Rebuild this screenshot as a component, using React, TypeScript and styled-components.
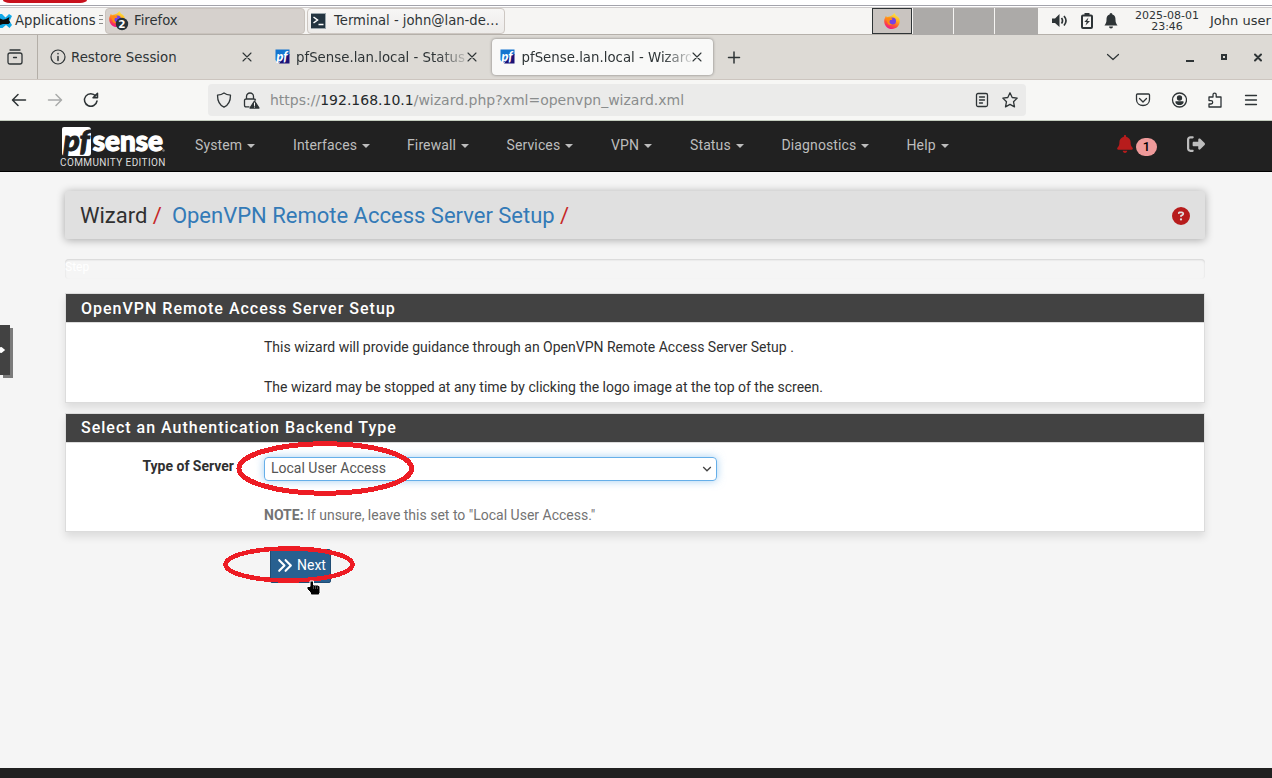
import React from 'react';
import styled, { createGlobalStyle } from 'styled-components';
import { FaBell, FaRightFromBracket, FaCircleQuestion, FaAnglesRight } from 'react-icons/fa6';

const Global = createGlobalStyle`
  * { box-sizing: border-box; }
  html, body { margin: 0; padding: 0; overflow: hidden; }
  body { background: #f5f5f5; font-family: Roboto, sans-serif; font-size: 14px; color: #303030; }
`;

const ui = `'DejaVu Sans', sans-serif`;

const Screen = styled.div`
  width: 1272px; height: 778px; display: flex; flex-direction: column; position: relative; overflow: hidden;
  background: #f5f5f5;
`;
const TopStrip = styled.div`
  height: 8px; flex: none; background: #fff; border-bottom: 1px solid #cfcccc; padding-left: 3px;
  background-image: linear-gradient(#a3a3ab, #a3a3ab); background-size: 100% 1px; background-position: 0 5px; background-repeat: no-repeat;
`;
const RedTab = styled.div`
  width: 84px; height: 3px; background: #c8101c; border-radius: 0 0 7px 7px / 0 0 3px 3px;
`;

const TaskBar = styled.div`
  height: 27px; flex: none; display: flex; background: #f6f5f3; border-bottom: 1px solid #b5b0aa;
  font: 13.2px ${ui}; color: #2e3436; white-space: nowrap;
`;
const AppsMenu = styled.div`
  width: 105px; display: flex; align-items: center; flex: none; padding-bottom: 2px;
  svg { flex: none; margin-top: 2px; }
  span { margin-left: 3px; width: 81px; }
`;
const Handle = styled.i`
  margin-left: 3px; width: 4px; height: 10px;
  background: repeating-linear-gradient(#8b8b89 0 1px, transparent 1px 4px);
`;
const TaskButton = styled.div<{ $active?: boolean; $w: number }>`
  width: ${p => p.$w}px; height: 26px; margin-right: 2px; flex: none; display: flex; align-items: center; padding: 0 0 1px 3px; gap: 5px;
  border: 1px solid ${p => (p.$active ? '#c9c3bd' : '#cdc7c2')}; border-radius: 4px;
  background: ${p => (p.$active ? '#d6d1cd' : 'linear-gradient(#f7f6f5, #edebe9)')};
  svg { flex: none; }
`;
const Spacer = styled.div`flex: 1;`;
const Pager = styled.div`
  display: flex; width: 166px; gap: 1px; background: #f6f5f3;
`;
const Desk = styled.div<{ $active?: boolean; $w: number }>`
  width: ${p => p.$w}px; height: ${p => (p.$active ? 26 : 27)}px; background: ${p => (p.$active ? '#c9c4c0' : '#acaaa8')};
  ${p => p.$active && 'border: 1px solid #2e3436;'}
  display: flex; align-items: center; justify-content: center;
`;
const Tray = styled.div`
  width: 94px; display: flex; align-items: center; padding-left: 14px; gap: 10.5px; svg { flex: none; }
`;
const Clock = styled.div`
  width: 70px; text-align: center; font-size: 11px; line-height: 11px; padding-top: 2px;
`;
const User = styled.div`
  width: 70px; padding: 4px 0 0 8px; line-height: 17px; font-size: 13px;
`;

const TabBar = styled.div`
  height: 45px; flex: none; display: flex; background: #dddad5; border-bottom: 1px solid #ccc5bf;
  font: 13.33px ${ui}; color: #2e3436; padding-right: 7px;
`;
const RecentBox = styled.div`
  width: 38px; border-right: 1px solid #b3aea7; display: flex; align-items: center; padding-left: 7px; flex: none;
`;
const Tab = styled.div<{ $active?: boolean; $w: number }>`
  width: ${p => p.$w}px; height: 36px; margin-top: 4px; display: flex; align-items: center; gap: 5.5px; flex: none;
  padding: 0 ${p => (p.$active ? 11 : 13)}px 0 ${p => (p.$active ? 8 : 10)}px;
  border-radius: 4px; white-space: nowrap;
  ${p => p.$active && 'background: #f9f9f8; box-shadow: 0 0 3px rgba(0,0,0,.45);'}
  svg { flex: none; }
`;
const TabTitle = styled.span<{ $fade?: boolean }>`
  flex: 1; min-width: 0; overflow: hidden; line-height: 20px; padding-top: 1px;
  ${p => p.$fade && 'mask-image: linear-gradient(to right, #000 calc(100% - 28px), rgba(0,0,0,.15) 100%); margin-right: -4.5px;'}
`;
const WinControls = styled.div`
  display: flex; align-items: center; width: 160px; svg { flex: none; }
`;

const ToolBar = styled.div`
  height: 41px; flex: none; display: flex; align-items: center; background: #f7f7f5; border-bottom: 1px solid #c3ccbe;
  padding: 0 13px 0 11px;
`;
const ToolButtons = styled.div<{ $gap: number }>`
  display: flex; gap: ${p => p.$gap}px; align-items: center; svg { display: block; }
`;
const UrlBar = styled.div`
  width: 818px; flex: none; height: 32px; margin: 0 109px 0 109px; border-radius: 4px; background: #ebebea;
  display: flex; align-items: center; padding: 0 8px; font: 14px ${ui}; color: #8a8d8d;
`;
const Url = styled.div`
  margin-left: 10px; flex: 1; white-space: nowrap; b { font-weight: 400; color: #24292b; }
`;

const Nav = styled.nav`
  height: 51px; flex: none; background: #212121; border-bottom: 1px solid #000; display: flex; padding-left: 56px;
`;
const Logo = styled.svg`display: block; flex: none; width: 120px; height: 50px;`;
const Menu = styled.div`
  display: flex; padding: 0 0 0 19px; height: 48px; align-items: center; flex: 1;
`;
const MenuItem = styled.div<{ $w: number }>`
  width: ${p => p.$w}px; color: #bdbdbd; display: flex; align-items: center; gap: 5px; font-size: 14px; letter-spacing: .12px;
  &::after { content: ''; margin-top: 2px; border: 4px solid transparent; border-top-color: #bdbdbd; border-bottom: 0; }
`;
const Alerts = styled.div`
  width: 156px; display: flex; height: 48px; align-items: center; color: #b71c1c; svg { display: block; margin-bottom: 2px; }
`;
const Badge = styled.span`
  width: 21px; height: 18px; border-radius: 9px; background: #ef9a9a; color: #000; font-size: 13px; font-weight: 500;
  display: flex; align-items: center; justify-content: center; margin: 3px 30px 0 2px;
`;

const Page = styled.main`
  flex: 1; padding: 19px 67px 0 65px; display: flex; flex-direction: column;
`;
const Header = styled.header`
  height: 48px; flex: none; background: #e0e0e0; border-radius: 2px; box-shadow: 0 1px 9px rgba(0,0,0,.32);
  display: flex; align-items: center; padding: 0 15px; font-size: 22px; white-space: pre;
  em { font-style: normal; color: #c62828; letter-spacing: -.25px; }
  a { color: #337ab7; }
  svg { margin: 2px 0 0 auto; }
`;
const Progress = styled.div`
  height: 20px; flex: none; margin: 20px 0 14px; border-radius: 4px; box-shadow: inset 0 1px 2px rgba(0,0,0,.14);
  color: #fff; font-size: 12px; line-height: 16px;
`;
const Panel = styled.section<{ $h: number }>`
  height: ${p => p.$h}px; flex: none; margin-bottom: 10px; border: 1px solid #dcdcdc; background: #fff;
  box-shadow: 0 5px 8px rgba(0,0,0,.10);
`;
const PanelTitle = styled.h2<{ $line: number }>`
  margin: 0; height: 29px; background: #424242; color: #fff; font-size: 16px; font-weight: 500; letter-spacing: 1px;
  line-height: ${p => p.$line}px; padding-left: 15px; border-bottom: 1px solid #dcdcdc;
`;
const Copy = styled.p<{ $top: number }>`
  margin: ${p => p.$top}px 0 0 198px; line-height: 20px; font-size: 14px;
`;
const FieldRow = styled.div`
  display: flex; padding-top: 14px;
`;
const Label = styled.label`
  width: 168px; margin-right: 30px; text-align: right; font-weight: 700; line-height: 18px;
`;
const Select = styled.div`
  width: 453px; height: 24px; border: 1px solid #66afe9; border-radius: 4px; box-shadow: 0 0 8px rgba(102,175,233,.6);
  display: flex; align-items: center; justify-content: space-between; padding: 0 4px 2px 6px; color: #555;
  svg { margin-top: 2px; }
`;
const Note = styled.p`
  margin: 24px 0 0 198px; color: #737373; line-height: 20px;
`;
const Next = styled.button`
  width: 61px; height: 34px; margin: 7px 0 0 205px; border: 1px solid #204d74; border-radius: 2px; background: #286090;
  color: #fff; font: 14px Roboto, sans-serif; display: flex; align-items: center; gap: 4px; padding: 0 5px 2px; white-space: nowrap;
  svg { flex: none; }
`;
const Footer = styled.footer`height: 10px; flex: none; background: #212121;`;
const SideHandle = styled.div`
  position: absolute; left: 0; top: 325px; width: 10px; height: 50px; background: #424242; box-shadow: 3px 3px 0 #7b7b7b;
  display: flex; align-items: center;
`;
const Marks = styled.svg`position: absolute; left: 0; top: 0; pointer-events: none;`;

const Flame = ({ size }: { size: number }) => (
  <svg width={size} height={size} viewBox="0 0 16 16">
    <defs>
      <linearGradient id="ff" x1=".8" y1="0" x2=".35" y2="1">
        <stop offset="0" stopColor="#fff14a" /><stop offset=".4" stopColor="#ffb01f" /><stop offset=".7" stopColor="#ff5a30" /><stop offset="1" stopColor="#f0148a" />
      </linearGradient>
    </defs>
    <path d="M1.800 3 3 4l2.500-.5L8 2.500 10.500 0l1.300 2.500L14 4l1.300 1.500C17 11 13.500 16 8 16S-.8 11 .5 6z" fill="url(#ff)" />
    <circle cx="8.500" cy="8" r="3.500" fill="#7542e5" />
    <path d="M2 5.500 5 4.300 8.500 5.600 7.800 7H6L5.400 9C5.600 10.600 7 11.300 8.500 11.300 6 12.800 3.500 11.500 3.300 9z" fill="#ff8a16" />
  </svg>
);

const PfIcon = () => (
  <svg width="16" height="16" viewBox="0 0 16 16">
    <path d="M.5.500h14V6L9 10 3 14l-2.500-3z" fill="#1475cf" /><path d="M14.500 5v9.500H4L9 8z" fill="#1b1277" />
    <text x="1.500" y="11.500" fontFamily="Lato, sans-serif" fontWeight="900" fontStyle="italic" fontSize="12.500" fill="#fff" textLength="11" lengthAdjust="spacingAndGlyphs">pf</text>
  </svg>
);

const stroke = { fill: 'none', stroke: '#2e3436', strokeWidth: 1.3, strokeLinecap: 'round', strokeLinejoin: 'round' } as const;

const Cross = () => (
  <svg width="10" height="10" viewBox="0 0 10 10" {...stroke} strokeWidth="1.100"><path d="M1 1l8 8M9 1 1 9" /></svg>
);

export default function App() {
  return (
    <>
      <Global />
      <Screen>
        <TopStrip><RedTab /></TopStrip>

        <TaskBar>
          <AppsMenu>
            <svg width="12" height="14" viewBox="0 0 12 14">
              <path d="M0 0h2l3.500 3.500L9 0l3 2-2.500 5 2.500 4-2.500 3L6 11l-3.500 3H0z" fill="#12a9e8" />
              <path d="M0 4.500l3 1.200L6 5l3.500-2-.8 3 1.600 2.200L8.500 10H3L0 11z" fill="#0b0b0b" />
            </svg>
            <span>Applications</span>
            <Handle />
          </AppsMenu>
          <TaskButton $active $w={200}>
            <svg width="20" height="20" viewBox="0 0 20 20">
              <g><Flame size={16} /></g>
              <circle cx="13" cy="13" r="6.200" fill="#263238" />
              <text x="13" y="16.800" textAnchor="middle" fontFamily="DejaVu Sans, sans-serif" fontWeight="700" fontSize="10.500" fill="#fff">2</text>
            </svg>
            <span>Firefox</span>
          </TaskButton>
          <TaskButton $w={198}>
            <svg width="18" height="16" viewBox="0 0 18 16">
              <rect x="-.5" y=".5" width="15" height="15" fill="#233440" stroke="#9aa5ab" />
              <path d="M2.500 4l4 3-4 3M7.500 11.500h5" fill="none" stroke="#fff" strokeWidth="1.500" />
            </svg>
            <span>Terminal - john@lan-de…</span>
          </TaskButton>
          <Spacer />
          <Pager>
            <Desk $active $w={40}><Flame size={16} /></Desk>
            <Desk $w={40} /><Desk $w={40} /><Desk $w={43} />
          </Pager>
          <Tray>
            <svg width="17" height="16" viewBox="0 0 17 16" fill="#2e3436">
              <path d="M0 5.500h3L7.500 1v13L3 10H0z" />
              <path d="M9.500 5q2 2.700 0 5.500M12 3q4 4.700 0 9.500" fill="none" stroke="#2e3436" strokeWidth="1.700" />
            </svg>
            <svg width="14" height="16" viewBox="0 0 14 16">
              <path d="M4.500 0h5v2h-5z" fill="#2e3436" />
              <rect x="2" y="2.500" width="10" height="12.500" rx="1" fill="none" stroke="#2e3436" strokeWidth="2" />
              <path d="M8.500 4.500 4.300 9h2.400l-1.200 3.500L10 8H7.300z" fill="#2e3436" />
            </svg>
            <svg width="14" height="16" viewBox="0 0 14 16" fill="#2e3436">
              <path d="M7 0a1.500 1.500 0 0 1 1.400 1.600C11 2.300 11.500 4.500 11.500 7c0 2.500.8 3.600 2 5.500H.5C1.700 10.600 2.500 9.500 2.500 7c0-2.500.5-4.700 3.100-5.400A1.500 1.500 0 0 1 7 0zM5 13.500h4a2 2 0 0 1-4 0z" />
            </svg>
          </Tray>
          <Clock>2025-08-01<br />23:46</Clock>
          <User>John user</User>
        </TaskBar>

        <TabBar>
          <RecentBox>
            <svg width="16" height="16" viewBox="0 0 16 16" {...stroke}>
              <path d="M3 1h10M1 6q0-2 2-2h10q2 0 2 2v7q0 2-2 2H3q-2 0-2-2zM6.500 8.500h3" />
            </svg>
          </RecentBox>
          <Tab $w={225} style={{ marginLeft: 1.5 }}>
            <svg width="16" height="16" viewBox="0 0 16 16" {...stroke} strokeWidth="1.200">
              <circle cx="8" cy="8" r="7" /><path d="M8 7.500v4M8 4.600v.2" strokeWidth="1.500" />
            </svg>
            <TabTitle>Restore Session</TabTitle>
            <Cross />
          </Tab>
          <Tab $w={225}><PfIcon /><TabTitle $fade>pfSense.lan.local - Status</TabTitle><Cross /></Tab>
          <Tab $active $w={221} style={{ marginLeft: 2.5 }}><PfIcon /><TabTitle $fade>pfSense.lan.local - Wizard</TabTitle><Cross /></Tab>
          <svg width="42" height="44" viewBox="0 0 42 44" {...stroke} strokeWidth="1.500"><path d="M15.500 22.500h11M21 17v11" /></svg>
          <Spacer />
          <WinControls>
            <svg width="160" height="20" viewBox="0 0 160 20" {...stroke}>
              <path d="M2.500 7.500l5.500 5L13.500 7.500" strokeWidth="1.200" />
              <path d="M81 14h8" strokeWidth="2" strokeLinecap="butt" />
              <rect x="117" y="8" width="4" height="4" strokeWidth="2" strokeLinejoin="miter" />
              <path d="M150 7.500l6 6M156 7.500l-6 6" strokeWidth="2" />
            </svg>
          </WinControls>
        </TabBar>

        <ToolBar>
          <ToolButtons $gap={20}>
            <svg width="16" height="16" viewBox="0 0 16 16" {...stroke} strokeWidth="1.500"><path d="M14.500 8H2M7 2.500 1.500 8 7 13.500" /></svg>
            <svg width="16" height="16" viewBox="0 0 16 16" {...stroke} strokeWidth="1.500" stroke="#a9abaa"><path d="M1.500 8H14M9 2.500 14.500 8 9 13.500" /></svg>
            <svg width="16" height="16" viewBox="0 0 16 16" {...stroke} strokeWidth="1.500"><path d="M14 9a6.300 6.300 0 1 1-1.300-5M14.500 1.300v4.400H10z" /></svg>
          </ToolButtons>
          <UrlBar>
            <ToolButtons $gap={11}>
              <svg width="16" height="16" viewBox="0 0 16 16" {...stroke}><path d="M8 1c2 1.500 4 2 6.500 2.200 0 5-1.300 9.500-6.500 12-5.200-2.500-6.500-7-6.500-12C4 3 6 2.500 8 1z" /></svg>
              <svg width="17" height="17" viewBox="0 0 17 17" {...stroke}>
                <path d="M3.500 7V4.500a3.500 3.500 0 0 1 7 0V7M6 14.800H3q-1.500 0-1.500-1.500V8.500Q1.500 7 3 7h8q1 0 1.500 1" />
                <path d="M11.500 9 16 16H7z" fill="#2e3436" /><path d="M11.500 11v2.500M11.500 15v.1" stroke="#fff" strokeWidth="1" />
              </svg>
            </ToolButtons>
            <Url>https://<b>192.168.10.1</b>/wizard.php?xml=openvpn_wizard.xml</Url>
            <ToolButtons $gap={12}>
              <svg width="16" height="16" viewBox="0 0 16 16" {...stroke}><rect x="2.500" y="1.500" width="11" height="13" rx="1.500" /><path d="M5.500 5h5M5.500 8h5M5.500 11h3" /></svg>
              <svg width="16" height="16" viewBox="0 0 16 16" {...stroke}><path d="M8 .8l2.200 4.700 5 .6-3.700 3.600 1 5.200L8 12.400l-4.500 2.500 1-5.200L.8 6.100l5-.6z" /></svg>
            </ToolButtons>
          </UrlBar>
          <ToolButtons $gap={20}>
            <svg width="16" height="16" viewBox="0 0 16 16" {...stroke}><path d="M1.500 3q0-1 1-1h11q1 0 1 1v4.500c0 8-13 8-13 0zM4.500 6.500 8 10l3.500-3.500" /></svg>
            <svg width="16" height="16" viewBox="0 0 16 16" {...stroke}><circle cx="8.500" cy="8" r="7" /><circle cx="8.500" cy="6" r="2" fill="#2e3436" /><path d="M5 10h7q-.5 2.300-3.500 2.300T5 10z" fill="#2e3436" /></svg>
            <svg width="16" height="16" viewBox="0 0 16 16" {...stroke}><path d="M2 5h4V2.800a1.500 1.500 0 0 1 3.200 0V5h4.800V15H2v-3h2a1.700 1.700 0 0 0 0-3.400H2z" /></svg>
            <svg width="16" height="16" viewBox="0 0 16 16" {...stroke}><path d="M2.500 3.500h11M2.500 8h11M2.500 12.500h11" /></svg>
          </ToolButtons>
        </ToolBar>

        <Nav>
          <Logo viewBox="0 0 120 50">
            <path d="M8 6h24q3 0 3 3v23q0 3-3 3H9q-3 0-3-3V8q0-2 2-2z" fill="#fff" />
            <text x="7.500" y="29.500" fontFamily="Lato, sans-serif" fontWeight="900" fontStyle="italic" fontSize="28" fill="#212121" stroke="#212121" strokeWidth="1" textLength="26" lengthAdjust="spacingAndGlyphs">pf</text>
            <text x="36.800" y="29.500" fontFamily="Lato, sans-serif" fontWeight="900" fontSize="28" fill="#fff" stroke="#fff" strokeWidth="1.300" textLength="70" lengthAdjust="spacingAndGlyphs">sense</text>
            <circle cx="107.500" cy="29.500" r="1.200" fill="#777" />
            <text x="4" y="45" fontFamily="Roboto, sans-serif" fontSize="10" fill="#ddd" textLength="105.500">COMMUNITY EDITION</text>
          </Logo>
          <Menu>
            <MenuItem $w={98}>System</MenuItem>
            <MenuItem $w={114}>Interfaces</MenuItem>
            <MenuItem $w={99.5}>Firewall</MenuItem>
            <MenuItem $w={104.5}>Services</MenuItem>
            <MenuItem $w={79}>VPN</MenuItem>
            <MenuItem $w={91.5}>Status</MenuItem>
            <MenuItem $w={125}>Diagnostics</MenuItem>
            <MenuItem $w={60}>Help</MenuItem>
          </Menu>
          <Alerts>
            <FaBell size={18} />
            <Badge>1</Badge>
            <FaRightFromBracket size={18} color="#bdbdbd" />
          </Alerts>
        </Nav>

        <Page>
          <Header>
            Wizard<em> /  </em><a>OpenVPN Remote Access Server Setup</a><em> /</em>
            <FaCircleQuestion size={18} color="#b71c1c" />
          </Header>
          <Progress>Step</Progress>
          <Panel $h={110}>
            <PanelTitle $line={29}>OpenVPN Remote Access Server Setup</PanelTitle>
            <Copy $top={14}>This wizard will provide guidance through an OpenVPN Remote Access Server Setup .</Copy>
            <Copy $top={20}>The wizard may be stopped at any time by clicking the logo image at the top of the screen.</Copy>
          </Panel>
          <Panel $h={119}>
            <PanelTitle $line={28}>Select an Authentication Backend Type</PanelTitle>
            <FieldRow>
              <Label>Type of Server</Label>
              <Select>
                Local User Access
                <svg width="10" height="8" viewBox="0 0 10 8"><path d="M1.200 2 5 5.800 8.800 2" fill="none" stroke="#444" strokeWidth="1.300" /></svg>
              </Select>
            </FieldRow>
            <Note><b>NOTE:</b> If unsure, leave this set to "Local User Access."</Note>
          </Panel>
          <Next><FaAnglesRight size={17} />Next</Next>
        </Page>
        <Footer />

        <SideHandle>
          <svg width="6" height="8" viewBox="0 0 6 8"><path d="M0 1.300 1.500 1l3.700 3-3.700 3L0 6.700z" fill="#fff" /></svg>
        </SideHandle>
        <Marks width="1272" height="778" viewBox="0 0 1272 778">
          <g fill="none" stroke="#ed1c24" shapeRendering="crispEdges">
            <ellipse cx="325.300" cy="468.500" rx="86.300" ry="24.800" strokeWidth="5" />
            <ellipse cx="289" cy="564.500" rx="63.500" ry="16" strokeWidth="4.500" />
          </g>
          <path d="M310 581h3.500v4h4.500l2 1.500v6l-1 2.500h-8l-1-3-3-3v-2.500h3z" fill="#000" stroke="#fff" strokeWidth="1" />
          <path d="M313.500 586v3M315.500 586v3M317.500 586.500v2.500" stroke="#999" strokeWidth=".5" />
        </Marks>
      </Screen>
    </>
  );
}
